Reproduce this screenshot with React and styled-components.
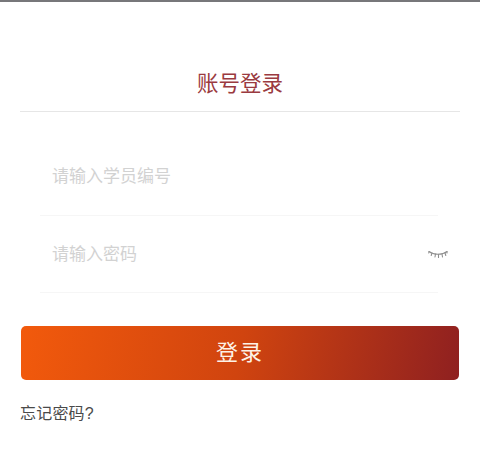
import styled, { createGlobalStyle } from "styled-components";

const GlobalStyle = createGlobalStyle`
  html, body {
    margin: 0;
    padding: 0;
    background: #fff;
  }

  body {
    font-family: "Liberation Sans", "Noto Sans CJK SC", sans-serif;
  }
`;

const Page = styled.div`
  width: 480px;
  height: 462px;
  overflow: hidden;
  background: #fff;
  border-top: 2px solid #77777a;
  box-sizing: border-box;
  padding: 0 20px;
`;

const Header = styled.header`
  height: 110px;
  box-sizing: border-box;
  padding-top: 68px;
  border-bottom: 1px solid #e6e6e6;
  text-align: center;
  font-size: 21.5px;
  line-height: 28px;
  color: #9a3a40;
`;

const Form = styled.form`
  padding: 26px 22px 0 20px;
`;

const Field = styled.div`
  height: 77.5px;
  box-sizing: border-box;
  display: flex;
  align-items: center;
  justify-content: space-between;
  padding: 0 0 3px 12px;
  border-bottom: 1px solid #f6f6f6;
  font-size: 17px;
  color: #d2d2d2;
`;

const Eye = styled.svg`
  flex: none;
  margin: 5px -10px 0 0;
`;

const Submit = styled.button`
  display: block;
  width: 438px;
  height: 54px;
  margin: 33px auto 0;
  padding: 0 0 7px;
  border: none;
  border-radius: 5px;
  background: linear-gradient(100deg, #f25a0c 0%, #d0440f 50%, #8f2020 100%);
  color: #fdf2e6;
  font-family: inherit;
  font-size: 22px;
  letter-spacing: 2px;
`;

const Forgot = styled.div`
  margin-top: 23px;
  padding-left: 0;
  font-size: 16px;
  line-height: 22px;
  letter-spacing: 0.2px;
  color: #4a4a4a;
`;

const EyeIcon = () => (
  <Eye width="20" height="10" viewBox="0 0 20 10" fill="none" stroke="#8f8f8f" strokeWidth="1.1" strokeLinecap="round">
    <path d="M1 1.500c2.500 2 5.500 2.700 9 2.700s6.500-.7 9-2.700" />
    <path d="M1 1.500 .8 3M4 3 3.200 5.500M7.500 4 7 7M10.500 4.200 10.500 7.500M14 4l.5 3M17 3l.8 2.500M19 1.500V3" />
  </Eye>
);

const App = () => {
  return (
    <Page>
      <GlobalStyle />
      <Header>账号登录</Header>
      <Form>
        <Field>请输入学员编号</Field>
        <Field>
          请输入密码
          <EyeIcon />
        </Field>
      </Form>
      <Submit type="button">登录</Submit>
      <Forgot>忘记密码?</Forgot>
    </Page>
  );
};

export default App;
